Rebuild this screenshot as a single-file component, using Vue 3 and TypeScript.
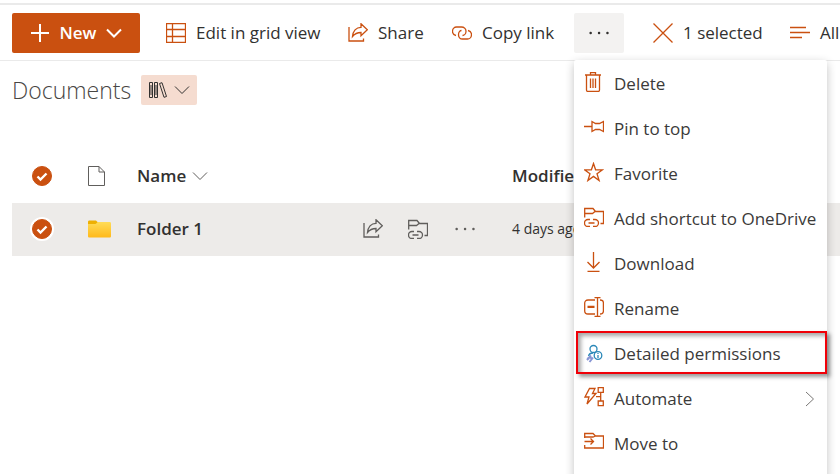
<script setup lang="ts">
import { ref } from 'vue'

interface MenuItem {
  label: string
  icon: string
  highlighted?: boolean
  submenu?: boolean
}

const icons: Record<string, string> = {
  grid: 'M.5 .5H19.5V19.5H.5ZM.5 6.5H19.5M.5 13.5H19.5M6.5 .5V19.5',
  share: 'M1 4V18H15.5V15.500M13 .8L19.300 6.800L13 12.800V9.500C9 9.500 6.500 11 4.500 13.500C5 8.500 8 4.300 13 4.300Z',
  link: 'M4 12.500C2 12 .5 10.500 .5 8.300C.5 5.600 2.500 4 4.500 4H9.500C12 4 14 6 14 8.300C14 11 12 12.500 10.500 12.500M16 7.500C18 8 19.500 9.500 19.500 11.700C19.500 14.400 17.500 16 15.500 16H10.500C8 16 6.500 14 6.500 11.700C6.500 9 8 7.500 9.500 7.500',
  close: 'M.5 .5L19.500 19.500M19.500 .5L.5 19.500',
  list: 'M0 4.500H16M0 9.500H20M0 14.500H12',
  trash: 'M1 3H17M6.500 3V.7H11.500V3M2.500 3V18C2.500 19 3 19.500 4 19.500H14C15 19.500 15.500 19 15.500 18V3M6.500 6.500V16M9 6.500V16M11.500 6.500V16',
  pin: 'M0 9.500H8M8 4.500V14.500L11.500 12.500H15.500L19.500 14.500V4.500L15.500 6.500H11.500Z',
  star: 'M9.500 1.500L11.600 7.800H18.500L13 11.800L15.100 18.500L9.500 14.400L3.900 18.500L6 11.800L.5 7.800H7.400Z',
  shortcut: 'M.7 10.500V1.500H9L11.500 4.500H19.500V16.500H16.500M.7 6.500H8.500L11 4.500M6 12.500H4A3.500 3.500 0 0 0 4 19.500H6M9 12.500H11A3.500 3.500 0 0 1 11 19.500H9M4.500 16H10.500',
  download: 'M9.500 0V15.500M3.500 10L9.500 16L15.500 10M3.500 19.300H15.500',
  rename: 'M11 3H4C2 3 .7 4.300 .7 6V14C.7 15.700 2 17 4 17H11M16 3C18 3 19.400 4.300 19.400 6V14C19.400 15.700 18 17 16 17M10.500 .6H16.500M10.500 19.400H16.500M13.500 .6V19.400M3.500 9.500H10.500M3.500 10.300H10.500',
  automate: 'M5.500 1.500H11L8.500 6.500H12L3 17L5 10H1ZM14.200 .7H19.300V5.300H14.200ZM14.200 14H19.300V18.600H14.200ZM16.700 5.300V14M12 9.700H16.700',
  move: 'M.7 6V1.500H9L11.500 4H19.500V16H.7V13M.7 5H9L11.500 4M.5 9.500H9.500M6.500 6.500L9.500 9.500L6.500 12.500',
  file: 'M1.500 .5H12L17.500 6V19.500H1.500ZM12 .5V6H17.500',
  more: 'M3 10h.1M10 10h.1M17 10h.1',
}

const menuItems: MenuItem[] = [
  { label: 'Delete', icon: 'trash' },
  { label: 'Pin to top', icon: 'pin' },
  { label: 'Favorite', icon: 'star' },
  { label: 'Add shortcut to OneDrive', icon: 'shortcut' },
  { label: 'Download', icon: 'download' },
  { label: 'Rename', icon: 'rename' },
  { label: 'Detailed permissions', icon: 'permissions', highlighted: true },
  { label: 'Automate', icon: 'automate', submenu: true },
  { label: 'Move to', icon: 'move' },
]

const allSelected = ref(true)
const folderSelected = ref(true)
const menuOpen = ref(true)
</script>

<template>
  <div class="page">
    <header class="toolbar">
      <button class="new" type="button">
        <svg class="icon" viewBox="0 0 20 20"><path d="M10 1V19M1 10H19" /></svg>
        <span>New</span>
        <svg class="chevron" viewBox="0 0 16 10"><path d="M1 1.500L8 8.500L15 1.500" /></svg>
      </button>
      <button class="command" type="button">
        <svg class="icon" viewBox="0 0 20 20"><path :d="icons.grid" /></svg>
        <span>Edit in grid view</span>
      </button>
      <button class="command" type="button">
        <svg class="icon" viewBox="0 0 20 20"><path :d="icons.share" /></svg>
        <span>Share</span>
      </button>
      <button class="command" type="button">
        <svg class="icon" viewBox="0 0 20 20"><path :d="icons.link" /></svg>
        <span>Copy link</span>
      </button>
      <div class="overflow">
        <button
          class="more"
          type="button"
          aria-label="More"
          :aria-expanded="menuOpen"
          @click="menuOpen = !menuOpen"
        >
          <svg class="dots" viewBox="0 0 20 20"><path :d="icons.more" /></svg>
        </button>
        <ul v-if="menuOpen" class="menu">
          <li v-for="item in menuItems" :key="item.label">
            <button class="item" :class="{ highlighted: item.highlighted }" type="button">
              <svg v-if="item.icon === 'permissions'" class="icon permissions" viewBox="0 0 20 20">
                <path class="key" d="M7 11.500L3 16M9 13.500L5.500 18M3.500 13.500L5 15.500M5.500 12.500L8 15" />
                <circle cx="9.500" cy="5" r="3.500" />
                <path d="M4.500 12C5 10 6.500 9 9 9" />
                <circle cx="14" cy="11.500" r="3.800" />
                <path d="M14 11V14M14 9V10" />
              </svg>
              <svg v-else class="icon" viewBox="0 0 20 20"><path :d="icons[item.icon]" /></svg>
              <span>{{ item.label }}</span>
              <svg v-if="item.submenu" class="arrow" viewBox="0 0 10 16">
                <path d="M1 1L8.500 8L1 15" />
              </svg>
            </button>
          </li>
        </ul>
      </div>
      <button class="command selection" type="button">
        <svg class="icon" viewBox="0 0 20 20"><path :d="icons.close" /></svg>
        <span>1 selected</span>
      </button>
      <button class="command" type="button">
        <svg class="icon" viewBox="0 0 20 20"><path :d="icons.list" /></svg>
        <span>All</span>
      </button>
    </header>

    <main>
      <div class="title">
        <h1>Documents</h1>
        <button class="library" type="button" aria-label="Switch library">
          <svg class="books" viewBox="0 0 20 16">
            <path d="M1.500 .5H4.500V15.500H1.500ZM6.500 .5H9.500V15.500H6.500ZM11.500 1.500L14 .7L18.500 14.500L16 15.300ZM3 3V13M8 3V13" />
          </svg>
          <svg class="chevron" viewBox="0 0 16 10"><path d="M1 1.500L8 8.500L15 1.500" /></svg>
        </button>
      </div>

      <table>
        <colgroup>
          <col class="col-check" />
          <col class="col-type" />
          <col class="col-name" />
          <col class="col-actions" />
          <col />
        </colgroup>
        <thead>
          <tr>
            <th>
              <label class="check">
                <input v-model="allSelected" type="checkbox" aria-label="Select all" />
                <svg viewBox="0 0 20 20"><path d="M5.500 10.500L8.500 13.500L14.500 7.500" /></svg>
              </label>
            </th>
            <th><svg class="file" viewBox="0 0 20 20"><path :d="icons.file" /></svg></th>
            <th colspan="2">
              <button class="sort" type="button">
                Name
                <svg class="chevron" viewBox="0 0 16 10"><path d="M1 1.500L8 8.500L15 1.500" /></svg>
              </button>
            </th>
            <th><button class="sort" type="button">Modified</button></th>
          </tr>
        </thead>
        <tbody>
          <tr>
            <td>
              <label class="check ringed">
                <input v-model="folderSelected" type="checkbox" aria-label="Select Folder 1" />
                <svg viewBox="0 0 20 20"><path d="M5.500 10.500L8.500 13.500L14.500 7.500" /></svg>
              </label>
            </td>
            <td>
              <svg class="folder" viewBox="0 0 24 18">
                <defs>
                  <linearGradient id="folder-front" x1="0" y1="0" x2="0" y2="1">
                    <stop offset="0" stop-color="#ffdc58" />
                    <stop offset="1" stop-color="#ffb91a" />
                  </linearGradient>
                </defs>
                <path fill="#eeb003" d="M1 2C1 1 1.500 .5 2.500 .5H9L11 2.500V6H1Z" />
                <path fill="url(#folder-front)" d="M1 4H8.500L11 2H22.500C23.500 2 24 2.500 24 3.500V16C24 17 23.500 17.500 22.500 17.500H2.500C1.500 17.500 1 17 1 16Z" />
              </svg>
            </td>
            <td><a class="name" href="#">Folder 1</a></td>
            <td>
              <div class="actions">
                <button type="button" aria-label="Share">
                  <svg class="icon" viewBox="0 0 20 20"><path :d="icons.share" /></svg>
                </button>
                <button type="button" aria-label="Add shortcut">
                  <svg class="icon" viewBox="0 0 20 20"><path :d="icons.shortcut" /></svg>
                </button>
                <button type="button" aria-label="More actions">
                  <svg class="dots" viewBox="0 0 20 20"><path :d="icons.more" /></svg>
                </button>
              </div>
            </td>
            <td class="modified">4 days ago</td>
          </tr>
        </tbody>
      </table>
    </main>
  </div>
</template>

<style>
body {
  background: #fff;
}
</style>

<style scoped>
.page {
  height: 100vh;
  overflow: hidden;
  box-sizing: border-box;
  padding-top: 3px;
  color: #323130;
  font: 17px/24px 'Open Sans', 'Noto Sans', sans-serif;
  white-space: nowrap;
}
button {
  padding: 0;
  border: 0;
  background: none;
  color: inherit;
  font: inherit;
  cursor: pointer;
}
svg {
  display: block;
  flex: none;
  fill: none;
  stroke: currentColor;
}
.icon {
  width: 20px;
  height: 20px;
  stroke: #ca5010;
  stroke-width: 1.3;
}
.chevron {
  width: 16px;
  height: 10px;
}
.dots {
  width: 24px;
  height: 24px;
  stroke-width: 2;
  stroke-linecap: round;
}

.toolbar {
  display: grid;
  grid-template-columns: 128px 178px 94px 122px 50px 136px 1fr;
  gap: 10px;
  padding: 8px 0 7px 12px;
  border-top: 2px solid #eaeaea;
  border-bottom: 1px solid #eaeaea;
}
.new {
  display: flex;
  align-items: center;
  justify-content: center;
  gap: 10px;
  height: 40px;
  border-radius: 2px;
  background: #ca5010;
  color: #fff;
  font-weight: 600;
}
.new svg {
  stroke: #fff;
  stroke-width: 2;
}
.command {
  display: flex;
  align-items: center;
  gap: 10px;
  padding: 0 10px;
}
.new + .command {
  margin-left: 6px;
}
.selection {
  margin-left: 9px;
}
.overflow {
  position: relative;
}
.more {
  display: grid;
  place-items: center;
  width: 100%;
  height: 40px;
  border-radius: 2px;
  background: #f3f2f1;
}

.menu {
  position: absolute;
  z-index: 1;
  top: 47px;
  left: 0;
  width: 253px;
  margin: 0;
  padding: 1px 0 24px;
  box-sizing: border-box;
  border-radius: 2px;
  background: #fff;
  box-shadow: 0 3px 10px rgba(0, 0, 0, 0.24);
  color: #3b3a39;
  list-style: none;
}
.menu li {
  height: 45px;
}
.item {
  display: flex;
  align-items: center;
  gap: 10px;
  width: 100%;
  height: 45px;
  padding: 0 12px 0 10px;
}
.item .icon {
  margin-bottom: 3px;
}
.arrow {
  width: 10px;
  height: 16px;
  margin-left: auto;
  color: #797775;
}
.highlighted {
  width: auto;
  min-width: calc(100% - 2px);
  height: 43px;
  margin-left: 2px;
  padding: 2px 6px 0;
  border: 2px solid #f00008;
  box-shadow: 3px 3px 4px rgba(0, 0, 0, 0.4), inset 3px 3px 4px rgba(0, 0, 0, 0.35);
}
.item .permissions {
  margin-bottom: 0;
  stroke: #2b88b8;
}
.permissions .key {
  stroke: #8795d4;
  stroke-width: 2;
}

.title {
  display: flex;
  align-items: center;
  gap: 10px;
  padding: 13px 12px 0;
}
h1 {
  margin: 0;
  color: #484644;
  font-size: 23px;
  font-weight: 300;
  line-height: 32px;
}
.library {
  display: flex;
  align-items: center;
  justify-content: center;
  gap: 6px;
  width: 56px;
  height: 30px;
  border-radius: 2px;
  background: #f5dcd0;
}
.books {
  width: 20px;
  height: 16px;
}

table {
  width: calc(100% - 12px);
  margin: 44px 0 0 12px;
  border-collapse: collapse;
  table-layout: fixed;
}
.col-check {
  width: 75px;
}
.col-type {
  width: 50px;
}
.col-name {
  width: 226px;
}
.col-actions {
  width: 149px;
}
th,
td {
  height: 52px;
  padding: 0 0 1px;
  text-align: left;
}
tbody tr {
  background: #edebe9;
}
.check {
  display: grid;
  width: 20px;
  height: 20px;
  margin-left: 20px;
}
.check input,
.check svg {
  grid-area: 1 / 1;
}
.check input {
  width: 20px;
  height: 20px;
  margin: 0;
  border: 1px solid #605e5c;
  border-radius: 50%;
  background: #fff;
  appearance: none;
}
.check input:checked {
  border-color: #ca5010;
  background: #ca5010;
}
.ringed input {
  box-shadow: 0 0 0 2px #fff;
}
.check svg {
  width: 20px;
  height: 20px;
  stroke: #fff;
  stroke-width: 2.4;
  pointer-events: none;
}
.file {
  width: 20px;
  height: 20px;
  color: #605e5c;
}
.folder {
  width: 24px;
  height: 18px;
  stroke: none;
}
.sort {
  display: flex;
  align-items: center;
  gap: 6px;
  font-weight: 600;
}
.sort .chevron {
  color: #605e5c;
}
.name {
  color: inherit;
  font-weight: 600;
  text-decoration: none;
}
.actions {
  display: flex;
  align-items: center;
  gap: 25px;
}
.actions .icon {
  stroke: #605e5c;
}
.actions .dots {
  color: #605e5c;
}
.modified {
  font-size: 14px;
}
</style>
